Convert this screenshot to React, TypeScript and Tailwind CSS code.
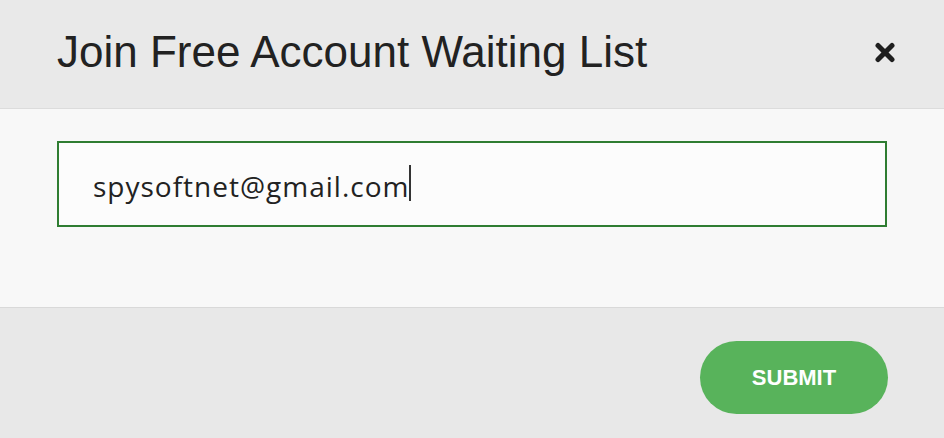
import React from 'react';

const CloseIcon = () => (
  <svg width="20" height="21" viewBox="0 0 20 21" fill="none" stroke="#1f1f1f" strokeWidth="5" strokeLinecap="round">
    <line x1="3" y1="3.5" x2="17" y2="17.5" />
    <line x1="17" y1="3.5" x2="3" y2="17.5" />
  </svg>
);

const App: React.FC = () => {
  const email = 'spysoftnet@gmail.com';

  return (
    <div className="w-[944px] h-[438px] flex flex-col bg-[#f8f8f8] overflow-hidden">
      <header className="h-[109px] flex items-center justify-between pl-[57px] pr-[49px] pb-[4px] bg-[#e9e9e9] border-b border-[#dcdcdc]">
        <h1 className="text-[44px] leading-none text-[#222] font-['Liberation_Sans',Arial,sans-serif]">
          Join Free Account Waiting List
        </h1>
        <button className="flex items-center justify-center" title="Close">
          <CloseIcon />
        </button>
      </header>

      <main className="flex-1 px-[57px] pt-[32px]">
        {/* focused email field, caret drawn after the text */}
        <div
          role="textbox"
          className="h-[86px] border-2 border-[#2f7d32] bg-[#fcfcfc] flex items-center pl-[34px] pr-4 pt-[4px]"
        >
          <span className="text-[28px] tracking-[1px] text-[#222] font-['Open_Sans','Noto_Sans',sans-serif] whitespace-nowrap">
            {email}
          </span>
          <span className="w-[2px] h-[36px] bg-[#333] -mt-[6px]" />
        </div>
      </main>

      <footer className="h-[131px] flex justify-end items-start pt-[33px] pr-[56px] bg-[#e8e8e8] border-t border-[#d9d9d9]">
        <button className="w-[188px] h-[73px] rounded-full bg-[#58b35b] text-white text-[22px] font-bold font-['Liberation_Sans',Arial,sans-serif]">
          SUBMIT
        </button>
      </footer>
    </div>
  );
};

export default App;
